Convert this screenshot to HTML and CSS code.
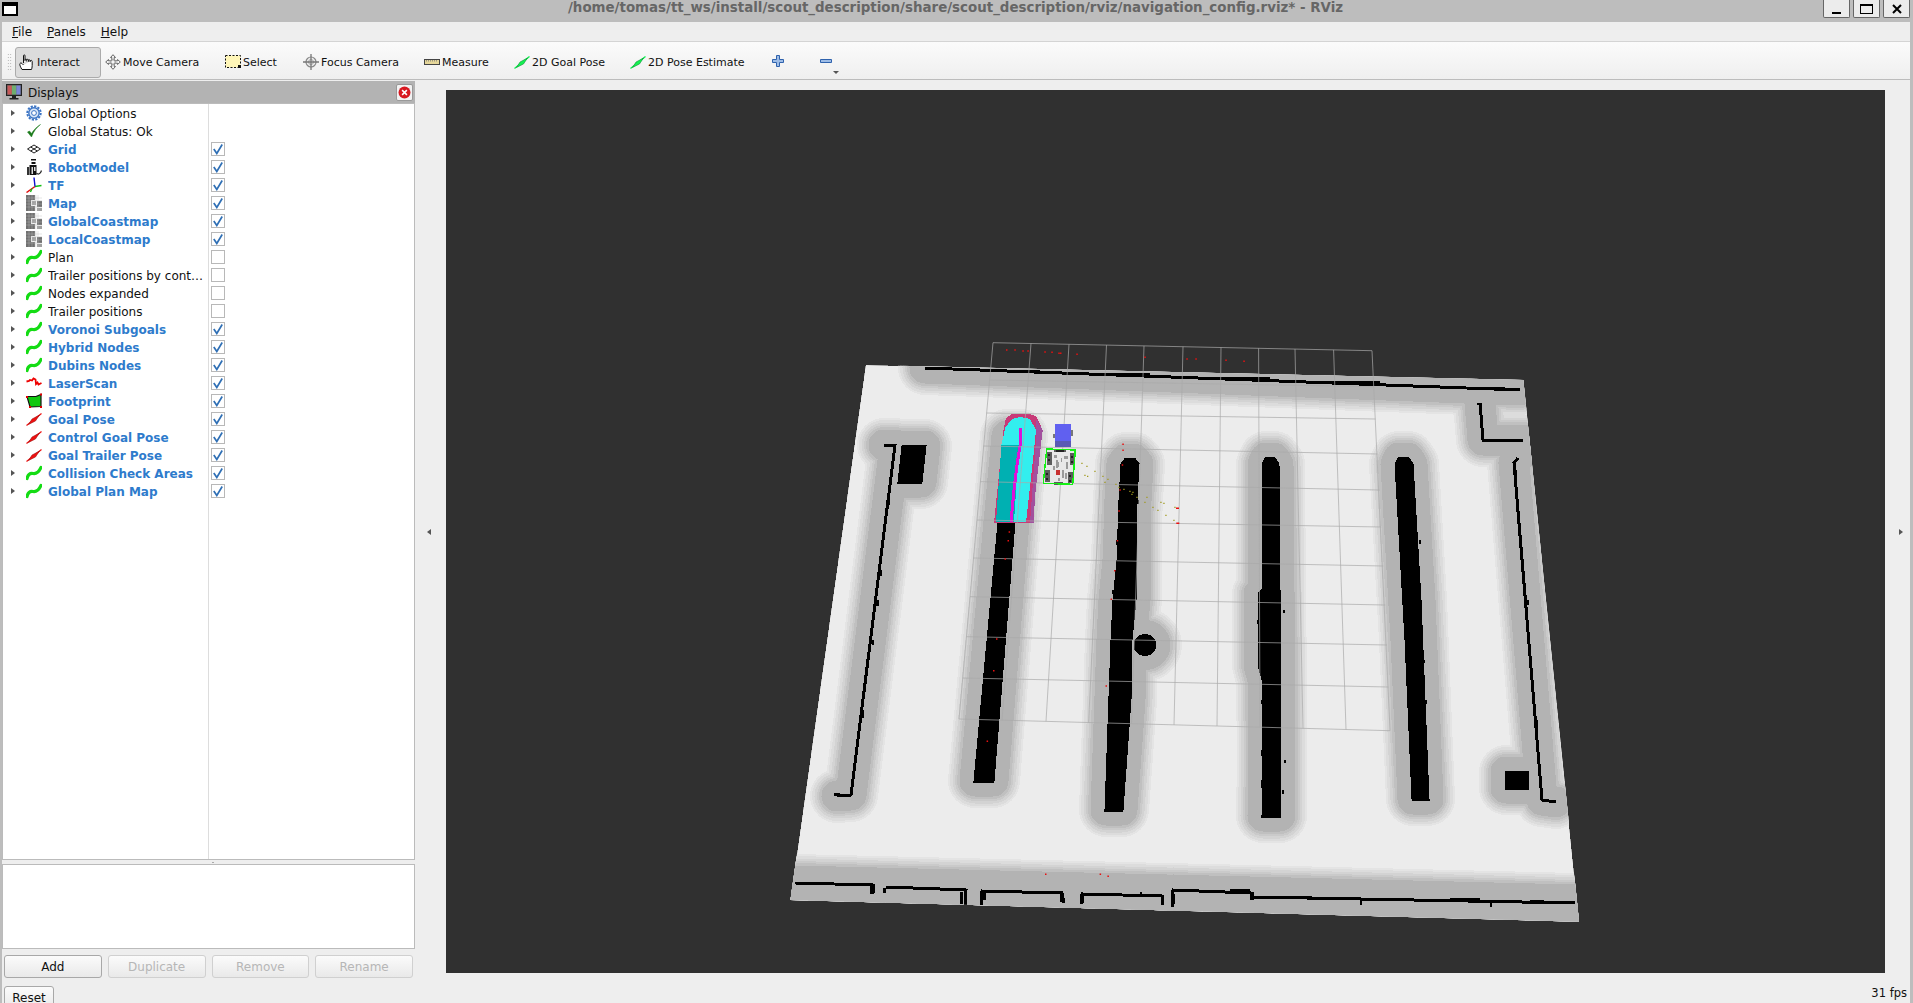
FILE: index.html
```html
<!DOCTYPE html>
<html lang="en">
<head>
<meta charset="utf-8">
<title>RViz</title>
<link rel="stylesheet" href="styles.css">
</head>
<body>
<svg class="defs" aria-hidden="true">
  <symbol id="i-path" viewBox="0 0 16 16"><path d="M1 13.500C2 9.500 4.500 8 7 8.500S12.500 8 15 2.500" fill="none" stroke="#14dc14" stroke-width="3.200" stroke-linecap="round"/></symbol>
  <symbol id="i-map" viewBox="0 0 16 16">
    <rect width="16" height="16" fill="#f4f4f4"/>
    <path d="M0 0h9v5h-4v6h4v5h-9z M11 6h5v6h-5z" fill="#707070"/>
    <path d="M11 0h5v5h-5z" fill="#fff"/>
    <path d="M6 6h4v4h-4z M11 13h5v3h-5z" fill="#a0a0a0"/>
    <path d="M3 0v16M6 0v16M9 0v16M12 0v16M0 3h16M0 6h16M0 9h16M0 12h16" stroke="#bbb" stroke-width=".4"/>
  </symbol>
  <symbol id="i-gear" viewBox="0 0 16 16"><circle cx="8" cy="8" r="5.200" fill="#dbe7f7" stroke="#3b74c4" stroke-width="1.400"/><circle cx="8" cy="8" r="6.700" fill="none" stroke="#3b74c4" stroke-width="2" stroke-dasharray="2.200 1.300"/><circle cx="8" cy="8" r="2.400" fill="#fff" stroke="#3b74c4"/></symbol>
  <symbol id="i-ok" viewBox="0 0 16 16"><path d="M1.500 9L5.500 14C7.500 8.500 10.500 4.500 14.500 1.500C10.500 4 7.500 7 5.500 10.500L3.500 8z" fill="#1a7a1a" stroke="#1a7a1a" stroke-width=".5"/></symbol>
  <symbol id="i-grid" viewBox="0 0 16 16"><path d="M1.500 8L8 4L14.500 8L8 12zM4.700 6L11.300 10M11.300 6L4.700 10" fill="none" stroke="#222" stroke-width="1"/></symbol>
  <symbol id="i-robot" viewBox="0 0 16 16"><path d="M5 0h5v1.500h-5zM5.500 3h4v2h-4zM3.500 6h7v10h-7z" fill="#111"/><path d="M1 8h2v8h-2z" fill="#333"/><path d="M5.500 8h1.500v7h-1.500zM8 8h1.500v4h-1.500z" fill="#ddd"/><path d="M10.500 14C12 16 14.500 15 15.500 11.500" fill="none" stroke="#222" stroke-width="1.200"/></symbol>
  <symbol id="i-tf" viewBox="0 0 16 16"><path d="M9 9.500L.5 15.500" stroke="#e01010" stroke-width="1.500"/><path d="M9 9.500L15.500 8.500M6 11.500L4.500 15" stroke="#10c010" stroke-width="1.300"/><path d="M9 9.500L8 .5" stroke="#1010d0" stroke-width="1.400"/></symbol>
  <symbol id="i-laser" viewBox="0 0 16 16"><path d="M.5 6.500L3 6L4 5L6 5.500L7.500 3.500L9.500 4.500L10 9L11.500 7.500L12.500 9.500L15.500 8" fill="none" stroke="#ee0000" stroke-width="1.800"/></symbol>
  <symbol id="i-foot" viewBox="0 0 16 16"><path d="M1 3.500L10 3.500L15 1.500L15 13.500L4 14z" fill="#10c810" stroke="#111" stroke-width="1.200"/><path d="M0 3h2v2h-2zM14 0.500h2v2h-2zM14 13h2v2h-2zM3 13h2v2h-2z" fill="#e00000"/></symbol>
  <symbol id="i-red" viewBox="0 0 16 16"><path d="M.5 14.500L15.500 2.500" stroke="#ee1010" stroke-width="1.200"/><path d="M2.500 13.500L6 8L13.500 4L9.500 10z" fill="#ee1010" stroke="#901010" stroke-width=".5"/></symbol>
  <symbol id="i-green" viewBox="0 0 16 13"><path d="M.5 12.500L15.500 .5" stroke="#0cf04c" stroke-width="1.300"/><path d="M2.500 11.500L6 6L13.500 2L9.500 8z" fill="#14f050" stroke="#088030" stroke-width=".5"/></symbol>
  <symbol id="i-hand" viewBox="0 0 16 16"><path d="M4.500 9V1.800C4.500 .5 6 .5 6 1.800V7M6 6C6 4.800 7.800 4.800 7.800 6V7.500M7.800 6.200C7.800 5 9.600 5 9.600 6.200V7.800M9.600 6.700C9.600 5.500 11.200 5.500 11.200 6.700V8M11.200 7.200C11.200 6 13.200 6 13.200 7.500V11.500C13.200 13.500 12.500 15.500 12.500 15.500H3C3 15.500 1 12.500 .8 10.500C.7 9 2 8.500 3 9.500L4.500 11" fill="#fff" stroke="#111" stroke-width="1"/></symbol>
  <symbol id="i-move" viewBox="0 0 16 16"><path d="M8 .7L10.500 3.500H9.200V6.800H12.500V5.500L15.300 8L12.500 10.500V9.200H9.200V12.500H10.500L8 15.300L5.500 12.500H6.800V9.200H3.500V10.500L.7 8L3.500 5.500V6.800H6.800V3.500H5.500z" fill="#f4f4f4" stroke="#666" stroke-width="1"/><circle cx="8" cy="8" r="2.500" fill="none" stroke="#999" stroke-width=".8"/></symbol>
  <symbol id="i-select" viewBox="0 0 16 16"><rect x=".5" y="1.500" width="15" height="12" fill="#fff6b8" stroke="#111" stroke-width="1" stroke-dasharray="2 1.500"/><rect x="13" y="11" width="3" height="3" fill="#111"/></symbol>
  <symbol id="i-focus" viewBox="0 0 16 16"><circle cx="8" cy="8" r="5" fill="#eee" stroke="#888" stroke-width="1.200"/><circle cx="8" cy="8" r="2.500" fill="none" stroke="#999" stroke-width=".8"/><path d="M8 0v16M0 8h16" stroke="#777" stroke-width="1.300"/></symbol>
  <symbol id="i-ruler" viewBox="0 0 16 16"><rect x=".5" y="5.500" width="15" height="5" fill="#e6d79a" stroke="#444" stroke-width="1"/><path d="M2.500 6v1.500M4.500 6v1.500M6.500 6v1.500M8.500 6v1.500M10.500 6v1.500M12.500 6v1.500" stroke="#777" stroke-width=".7"/></symbol>
  <symbol id="i-check" viewBox="0 0 12 12"><path d="M1.800 6L4.800 10.500L10.200 1.500" fill="none" stroke="#2f6fb5" stroke-width="1.700"/></symbol>
  <symbol id="i-monitor" viewBox="0 0 16 16"><rect x=".5" y=".5" width="15" height="11" fill="#555" stroke="#222"/><rect x="1.500" y="1.500" width="4.400" height="9" fill="#c85a5a"/><rect x="5.900" y="1.500" width="4.400" height="9" fill="#6fae6f"/><rect x="10.300" y="1.500" width="4.200" height="9" fill="#7a86d8"/><path d="M6 12h4v2h-4zM3.500 14h9v1.500h-9z" fill="#222"/></symbol>
</svg>

<header class="titlebar">
  <svg class="win-icon" viewBox="0 0 16 14"><rect x="1" y="1" width="14" height="12" fill="#fff" stroke="#000" stroke-width="2"/><rect x="1" y="1" width="14" height="3" fill="#000"/></svg>
  <div class="title">/home/tomas/tt_ws/install/scout_description/share/scout_description/rviz/navigation_config.rviz* - RViz</div>
  <div class="win-buttons">
    <div class="win-btn"><span class="glyph-min"></span></div>
    <div class="win-btn"><span class="glyph-max"></span></div>
    <div class="win-btn"><svg class="glyph-close" viewBox="0 0 10 10"><path d="M1 1L9 9M9 1L1 9" stroke="#000" stroke-width="2"/></svg></div>
  </div>
</header>

<div class="client">
  <nav class="menubar"><span><u>F</u>ile</span><span><u>P</u>anels</span><span><u>H</u>elp</span></nav>

  <div class="toolbar">
    <div class="handle"></div>
    <div class="tools">
      <div class="tool active"><svg class="tool-ic"><use href="#i-hand"/></svg>Interact</div>
      <div class="tool"><svg class="tool-ic"><use href="#i-move"/></svg>Move Camera</div>
      <div class="tool"><svg class="tool-ic"><use href="#i-select"/></svg>Select</div>
      <div class="tool"><svg class="tool-ic"><use href="#i-focus"/></svg>Focus Camera</div>
      <div class="tool"><svg class="tool-ic"><use href="#i-ruler"/></svg>Measure</div>
      <div class="tool"><svg class="tool-ic arrow-ic"><use href="#i-green"/></svg>2D Goal Pose</div>
      <div class="tool"><svg class="tool-ic arrow-ic"><use href="#i-green"/></svg>2D Pose Estimate</div>
      <div class="tool"><svg class="pm" viewBox="0 0 12 12"><path d="M4.500 .5h3v4h4v3h-4v4h-3v-4h-4v-3h4z" fill="#9dbce6" stroke="#2f62ad"/></svg></div>
      <div class="tool minus"><svg class="pm" viewBox="0 0 12 12"><path d="M.5 4.500h11v3h-11z" fill="#9dbce6" stroke="#2f62ad"/></svg><span class="more"></span></div>
    </div>
  </div>

  <main class="main">
    <aside class="dock">
      <div class="dock-title">
        <svg class="dock-ic"><use href="#i-monitor"/></svg>
        <span class="dock-name">Displays</span>
        <div class="dock-close"><svg viewBox="0 0 12 12"><circle cx="6" cy="6" r="5.500" fill="#d81820"/><path d="M3.800 3.800L8.200 8.200M8.200 3.800L3.800 8.200" stroke="#fff" stroke-width="1.400"/></svg></div>
      </div>
      <div class="tree">
        <div class="row"><i class="tri"></i><svg class="ic"><use href="#i-gear"/></svg><span class="lbl">Global Options</span></div>
        <div class="row"><i class="tri"></i><svg class="ic"><use href="#i-ok"/></svg><span class="lbl">Global Status: Ok</span></div>
        <div class="row"><i class="tri"></i><svg class="ic"><use href="#i-grid"/></svg><span class="lbl on">Grid</span><span class="box"><svg><use href="#i-check"/></svg></span></div>
        <div class="row"><i class="tri"></i><svg class="ic"><use href="#i-robot"/></svg><span class="lbl on">RobotModel</span><span class="box"><svg><use href="#i-check"/></svg></span></div>
        <div class="row"><i class="tri"></i><svg class="ic"><use href="#i-tf"/></svg><span class="lbl on">TF</span><span class="box"><svg><use href="#i-check"/></svg></span></div>
        <div class="row"><i class="tri"></i><svg class="ic"><use href="#i-map"/></svg><span class="lbl on">Map</span><span class="box"><svg><use href="#i-check"/></svg></span></div>
        <div class="row"><i class="tri"></i><svg class="ic"><use href="#i-map"/></svg><span class="lbl on">GlobalCoastmap</span><span class="box"><svg><use href="#i-check"/></svg></span></div>
        <div class="row"><i class="tri"></i><svg class="ic"><use href="#i-map"/></svg><span class="lbl on">LocalCoastmap</span><span class="box"><svg><use href="#i-check"/></svg></span></div>
        <div class="row"><i class="tri"></i><svg class="ic"><use href="#i-path"/></svg><span class="lbl">Plan</span><span class="box"></span></div>
        <div class="row"><i class="tri"></i><svg class="ic"><use href="#i-path"/></svg><span class="lbl">Trailer positions by cont…</span><span class="box"></span></div>
        <div class="row"><i class="tri"></i><svg class="ic"><use href="#i-path"/></svg><span class="lbl">Nodes expanded</span><span class="box"></span></div>
        <div class="row"><i class="tri"></i><svg class="ic"><use href="#i-path"/></svg><span class="lbl">Trailer positions</span><span class="box"></span></div>
        <div class="row"><i class="tri"></i><svg class="ic"><use href="#i-path"/></svg><span class="lbl on">Voronoi Subgoals</span><span class="box"><svg><use href="#i-check"/></svg></span></div>
        <div class="row"><i class="tri"></i><svg class="ic"><use href="#i-path"/></svg><span class="lbl on">Hybrid Nodes</span><span class="box"><svg><use href="#i-check"/></svg></span></div>
        <div class="row"><i class="tri"></i><svg class="ic"><use href="#i-path"/></svg><span class="lbl on">Dubins Nodes</span><span class="box"><svg><use href="#i-check"/></svg></span></div>
        <div class="row"><i class="tri"></i><svg class="ic"><use href="#i-laser"/></svg><span class="lbl on">LaserScan</span><span class="box"><svg><use href="#i-check"/></svg></span></div>
        <div class="row"><i class="tri"></i><svg class="ic"><use href="#i-foot"/></svg><span class="lbl on">Footprint</span><span class="box"><svg><use href="#i-check"/></svg></span></div>
        <div class="row"><i class="tri"></i><svg class="ic"><use href="#i-red"/></svg><span class="lbl on">Goal Pose</span><span class="box"><svg><use href="#i-check"/></svg></span></div>
        <div class="row"><i class="tri"></i><svg class="ic"><use href="#i-red"/></svg><span class="lbl on">Control Goal Pose</span><span class="box"><svg><use href="#i-check"/></svg></span></div>
        <div class="row"><i class="tri"></i><svg class="ic"><use href="#i-red"/></svg><span class="lbl on">Goal Trailer Pose</span><span class="box"><svg><use href="#i-check"/></svg></span></div>
        <div class="row"><i class="tri"></i><svg class="ic"><use href="#i-path"/></svg><span class="lbl on">Collision Check Areas</span><span class="box"><svg><use href="#i-check"/></svg></span></div>
        <div class="row"><i class="tri"></i><svg class="ic"><use href="#i-path"/></svg><span class="lbl on">Global Plan Map</span><span class="box"><svg><use href="#i-check"/></svg></span></div>
      </div>
      <div class="split-h"></div>
      <div class="desc"></div>
      <div class="actions">
        <button class="btn">Add</button>
        <button class="btn" disabled>Duplicate</button>
        <button class="btn" disabled>Remove</button>
        <button class="btn" disabled>Rename</button>
      </div>
    </aside>

    <div class="split-v"><i class="tri-left"></i></div>

    <svg class="viewport" viewBox="446 90 1439 883">
      <defs>
        <clipPath id="mapclip"><polygon points="865.700,365 1523.300,380 1579,921.800 790.500,900"/></clipPath>
        <g id="walls">
          <polygon points="1007,436 1021,436 993,781 975,781"/>
          <polygon points="1122,464 1126,459 1134,459 1138,464 1135,520 1135,600 1131,640 1130,700 1122,810 1106,810 1112,640 1114,600 1118,560 1120,500"/>
          <ellipse cx="1145" cy="645" rx="10" ry="9.500"/>
          <polygon points="1263,464 1266,458 1274,458 1278,464 1279,590 1280,680 1280,816 1263,816 1264,760 1263,680 1259,665 1259,594 1263,590"/>
          <polygon points="1396,464 1399,458 1408,458 1412,464 1420,600 1428,799 1413,799 1406,640"/>
          <polygon points="903,446 925,446 921,482 899,482"/>
          <polyline points="884,445 895,445 851,795 837,796"/>
          <polyline points="925,368 1198,378 1520,390"/>
          <polyline points="1480,403 1483,440 1523,440"/>
          <polyline points="1518,458 1514,463 1542,800 1556,802"/>
          <polygon points="1506,772 1527,772 1527,788 1506,788"/>
          <polyline points="795,883 873,885 873,893"/>
          <polyline points="886,887 966,890 965,905"/>
          <polyline points="981,905 982,891 1062,893 1064,903"/>
          <polyline points="1081,904 1082,894 1162,896 1162,905"/>
          <polyline points="1172,907 1173,890 1251,893 1253,897 1575,903"/>
        </g>
        <g id="band"><polyline points="795,881 1000,886 1250,892 1575,900"/></g>
      </defs>

      <rect class="vp-bg" x="446" y="90" width="1439" height="883"/>

      <g class="map" clip-path="url(#mapclip)">
        <polygon class="map-free" points="865.700,365 1523.300,380 1579,921.800 790.500,900"/>
        <g class="halo h1"><use href="#walls"/><use href="#band"/></g>
        <g class="halo h2"><use href="#walls"/><use href="#band"/></g>
        <g class="halo h3"><use href="#walls"/><use href="#band"/></g>
        <g class="halo h4"><use href="#walls"/><use href="#band"/></g>
        <g class="halo h5"><use href="#walls"/><use href="#band"/></g>
        <g class="halo h6"><use href="#walls"/><use href="#band"/></g>
        <polygon class="map-gray" points="790,884 1579,904 1579,922 790,900"/>
        <g class="halo wall"><use href="#walls"/></g>
        <path class="wall-rough" d="M925 368h40v2h-40zM1010 370h30v2h-30zM1090 373h60v2.500h-60zM1200 377h70v2.500h-70zM1330 381h50v2.500h-50zM1470 387h35v2.500h-35zM1122 480h2v3h-2zM1116 540h2v5h-2zM1112 590h2v4h-2zM1137 500h2v4h-2zM1135 560h2v6h-2zM1257 620h3v4h-3zM1283 610h2v3h-2zM1261 750h2v6h-2zM1282 790h2v4h-2zM1284 760h2v3h-2zM1261 700h2v4h-2zM1261 780h2v8h-2zM1419 540h2v4h-2zM1411 600h2v5h-2zM1425 700h2v4h-2zM1404 620h2v6h-2zM1423 660h2v3h-2zM1514 470h3v6h-3zM1521 560h2v8h-2zM1532 680h2v5h-2zM1536 720h2v8h-2zM1526 600h3v5h-3zM1540 790h3v8h-3zM1477 403h5v2h-5zM1480 420h2v5h-2zM876 600h3v6h-3zM861 710h3v8h-3zM880 570h2v6h-2zM872 640h2v5h-2zM866 670h2v4h-2zM888 500h2v5h-2zM853 770h2v6h-2zM834 793h6v3h-6zM883 888h3v5h-3zM870 886h4v8h-4zM960 892h3v12h-3zM983 892h3v8h-3zM1060 894h4v8h-4zM1081 896h3v7h-3zM1172 894h3v10h-3zM1140 892h2v4h-2zM1250 892h4v8h-4zM1230 889h20v2h-20zM1300 896h12v2h-12zM1360 899h2v6h-2zM1450 898h30v2h-30zM1490 902h2v5h-2zM1530 900h14v2h-14z"/>
      </g>

      <g class="costmap">
        <polygon class="cost-out" points="994,523 1003.500,430 1006,418 1013,413.500 1028,413.500 1036,416 1042.700,430 1038,470 1035,497 1033.600,523"/>
        <polygon class="cost-out2" points="1030,523 1036,440 1036,419 1042.700,430 1038,470 1035,497 1033.600,523"/>
        <polygon class="cost-cyan" points="996,522 1001.400,445 1005.500,427 1012,419 1020,417 1030,419 1036,430 1034,450 1030,487 1026,522"/>
        <polygon class="cost-teal" points="1001.400,445 1019,445 1014,522 996,522"/>
        <polyline class="cost-line" points="1020,428 1020,446 1017,465 1014,490 1011,522"/>
      </g>

      <g class="grid">
        <path d="M993 342.700L959 719M1031 343.500L1002 720.200M1069 344.300L1046 721.300M1106.500 345.100L1088.600 722.500M1144 345.900L1131.500 723.700M1183 346.700L1174 724.900M1221 347.500L1217 726M1258.600 348.300L1260 727.200M1295 349.100L1303 728.400M1333.600 349.900L1346 729.500M1372 350.700L1390 730.700"/>
        <path d="M993 342.700L1372 350.700M989.600 380L1373.800 386.700M986.500 413L1375.500 419M983.500 446L1377.400 454M980.300 481.700L1379.300 490M976.800 520L1381.300 527M973.400 558L1383.300 566M970 596.700L1385.300 605M966.400 636.700L1387 645M962.700 678L1388.500 687M959 719L1390 730.700"/>
      </g>

      <g class="robot">
        <rect class="blue-a" x="1055" y="424" width="15.700" height="17"/>
        <rect class="blue-b" x="1055" y="441" width="15.700" height="6"/>
        <path class="blue-c" d="M1053 434h2v4h-2zM1070.700 430h2v6h-2z"/>
        <polygon class="rob-body" points="1047,450 1075,451 1072.500,484 1043.500,483"/>
        <path class="rob-wheel" d="M1047 452h5v13h-5zM1070 453h5v12h-5zM1045 470h5v12h-5zM1068 472h5v11h-5zM1054 449h12v3h-12zM1054 482h9v3h-9z"/>
        <path class="rob-dark" d="M1048 454h2v2h-2zM1048 459h2v2h-2zM1071 456h2v2h-2zM1071 461h2v2h-2zM1046 473h2v2h-2zM1046 478h2v2h-2zM1069 475h2v2h-2zM1069 480h2v2h-2zM1056 450h8v2h-8z"/>
        <path class="rob-grey" d="M1054 455h3v3h-3zM1064 456h4v3h-4zM1056 460h2v8h-2zM1066 462h2v7h-2zM1061 458h1v4h-1zM1062 470h2v8h-2zM1058 478h2v3h-2zM1053 466h2v4h-2zM1058 462h1v5h-1zM1065 473h2v6h-2z"/>
        <rect class="rob-red" x="1055.500" y="470" width="4.500" height="5"/>
        <polygon class="rob-frame" points="1046.700,449 1075.300,450 1072.700,484.300 1043.300,483.300"/>
      </g>

      <path class="dots-red" d="M1006 350h1.500M1014.300 350h1.500M1022.300 351h1.500M1027.300 351h1.500M1044.300 352h1.500M1051.300 352.300h1.500M1058.300 353.300h1.500M1060 353.300h1.500M1076.300 354.300h1.500M1144.300 357.300h1.500M1186.300 359h1.500M1195.300 359h1.500M1225.300 360.300h1.500M1243.300 361.300h1.500M1122.300 444.300h1.500M1122.300 450.300h1.500M1121.700 465h1.500M1119.300 490h1.500M1118.300 511h1.500M1176 508.300h3M1176.300 523.300h3M1008.600 532h1.500M1007.500 540.700h1.500M1004.500 559h1.500M996 639h1.500M993 670.700h1.500M1116.700 540.700h1.500M1114 570.700h1.500M1110.600 599.300h1.500M1105.500 686h1.500M1045 874.300h1.500M1099.600 874.300h1.500M1107.400 876.300h1.500M986.600 741.300h1.500"/>
      <path class="dots-yellow" d="M1081.300 463.300h1.300M1086.300 466.300h1.300M1094.300 471.300h1.300M1084.300 475.300h1.300M1087 476.300h1.300M1102.300 476.300h1.300M1107.300 479.300h1.300M1104.300 482.300h1.300M1115.300 484.300h1.300M1118.300 487.300h1.300M1123.300 489.300h1.300M1129.300 491.300h1.300M1132.300 492.300h1.300M1131.300 494.300h1.300M1136.300 497.300h1.300M1146.300 497.300h1.300M1144.300 502.300h1.300M1160.300 502.300h1.300M1163.300 503.300h1.300M1152.300 507.300h1.300M1157.300 510.300h1.300M1174.300 507.300h1.300M1165.300 515.300h1.300M1173.300 520.300h1.300"/>
    </svg>

    <div class="split-r"><i class="tri-right"></i></div>
  </main>

  <footer class="status">
    <button class="btn reset">Reset</button>
    <span class="fps">31 fps</span>
  </footer>
</div>
</body>
</html>
```

FILE: styles.css
```css
* { box-sizing: border-box; }

html, body {
  margin: 0;
  height: 1003px;
  overflow: hidden;
}

body {
  background: #bdbdbd;
  font-family: "DejaVu Sans", sans-serif;
  font-size: 12px;
  color: #111;
}

.defs {
  position: absolute;
  width: 0;
  height: 0;
}

/* window frame */
.titlebar {
  display: flex;
  align-items: flex-start;
  height: 22px;
  background: #bdbdbd;
}

.win-icon {
  width: 16px;
  height: 14px;
  margin: 2px 0 0 2px;
  flex: none;
}

.title {
  flex: 1;
  text-align: center;
  font-weight: bold;
  font-size: 13.400px;
  line-height: 16px;
  color: #666;
  padding-left: 70px;
  white-space: nowrap;
}

.win-buttons {
  display: flex;
  gap: 3px;
  margin-right: 3px;
}

.win-btn {
  width: 27px;
  height: 18px;
  background: #ececec;
  border: 1px solid #666;
  border-top: 0;
  border-radius: 0 0 2px 2px;
  display: flex;
  align-items: center;
  justify-content: center;
}

.glyph-min {
  width: 9px;
  height: 2px;
  margin-top: 9px;
  background: #000;
}

.glyph-max {
  width: 13px;
  height: 10px;
  border: 1px solid #000;
  border-top-width: 2px;
}

.glyph-close {
  width: 10px;
  height: 10px;
}

.client {
  margin: 0 3px 0 2px;
  background: #eeeeee;
  height: 981px;
}

.menubar {
  display: flex;
  height: 19px;
  align-items: center;
  padding-left: 10px;
  gap: 15px;
  background: #eeeeee;
  font-size: 12px;
}

.toolbar {
  display: flex;
  height: 39px;
  padding: 5px 0 2px 5px;
  background: linear-gradient(#fbfbfb, #efefef);
  border-top: 1px solid #d4d4d4;
  border-bottom: 1px solid #bcbcbc;
}

.handle {
  width: 5px;
  margin: 6px 3px 6px 0;
  background: radial-gradient(circle, #aaa 0.6px, transparent 0.8px) 0 0 / 2.5px 3px;
}

.tools {
  display: grid;
  grid-template-columns: 86px 120px 78px 121px 90px 116px 142px 48px 30px;
  height: 31px;
}

.tool {
  display: flex;
  align-items: center;
  padding-left: 4px;
  padding-bottom: 1px;
  font-size: 11px;
  white-space: nowrap;
}

.tool.active {
  padding-left: 3px;
  background: #dcdcdc;
  border: 1px solid #ababab;
  border-radius: 3px;
}

.tool-ic {
  width: 16px;
  height: 16px;
  margin-right: 2px;
  flex: none;
}

.arrow-ic {
  height: 13px;
}

.pm {
  width: 12px;
  height: 12px;
  margin-bottom: 2px;
}

.minus {
  position: relative;
}

.more {
  position: absolute;
  left: 17px;
  top: 24px;
  border-top: 3px solid #555;
  border-left: 3px solid transparent;
  border-right: 3px solid transparent;
}

/* main area */
.main {
  display: flex;
  height: 899px;
}

.dock {
  width: 413px;
  flex: none;
  padding-top: 1px;
}

.dock-title {
  display: flex;
  align-items: center;
  height: 22px;
  padding-left: 4px;
  background: #b3b3b3;
  font-size: 12px;
}

.dock-name {
  padding-top: 2px;
}

.dock-ic {
  width: 16px;
  height: 16px;
  margin-right: 6px;
}

.dock-close {
  width: 17px;
  height: 17px;
  margin-left: auto;
  margin-right: 2px;
  background: #f2f2f2;
  border: 1px solid #999;
  border-radius: 2px;
  padding: 1px;
  display: flex;
}

.tree {
  height: 757px;
  background: #fff linear-gradient(#dddddd, #dddddd) no-repeat 205px 0 / 1px 100%;
  border: 1px solid #bbbbbb;
}

.row {
  display: flex;
  align-items: center;
  height: 18px;
}

.tri {
  width: 0;
  height: 0;
  margin-left: 8px;
  border-left: 4px solid #555;
  border-top: 3.500px solid transparent;
  border-bottom: 3.500px solid transparent;
  flex: none;
}

.ic {
  width: 16px;
  height: 16px;
  margin-left: 11px;
  flex: none;
}

.lbl {
  width: 160px;
  margin-left: 6px;
  padding-top: 2px;
  white-space: nowrap;
  overflow: hidden;
  flex: none;
}

.lbl.on {
  color: #2e7bcc;
  font-weight: bold;
}

.box {
  width: 14px;
  height: 14px;
  margin-left: 3px;
  background: #fff;
  border: 1px solid #b8b8b8;
  flex: none;
}

.box svg {
  display: block;
  width: 12px;
  height: 12px;
}

.split-h {
  height: 4px;
  background: radial-gradient(circle, #aaa 0.6px, transparent 0.8px) no-repeat 202px 1px / 18px 3px;
}

.desc {
  height: 85px;
  background: #fff;
  border: 1px solid #bbbbbb;
}

.actions {
  display: grid;
  grid-template-columns: repeat(4, 1fr);
  gap: 6px;
  padding: 6px 2px 0 2px;
}

.btn {
  height: 23px;
  padding: 0;
  font: 12px "DejaVu Sans", sans-serif;
  color: #111;
  background: linear-gradient(#fbfbfb, #e9e9e9);
  border: 1px solid #a8a8a8;
  border-radius: 3px;
}

.btn:disabled {
  color: #b6b6b6;
  border-color: #d0d0d0;
}

.split-v {
  width: 31px;
  flex: none;
  display: flex;
  align-items: center;
  justify-content: center;
  padding-right: 3px;
  height: 903px;
}

.tri-left {
  border-right: 4px solid #555;
  border-top: 3.500px solid transparent;
  border-bottom: 3.500px solid transparent;
}

.viewport {
  display: block;
  width: 1439px;
  height: 883px;
  margin-top: 10px;
  flex: none;
}

.split-r {
  flex: 1;
  display: flex;
  align-items: center;
  justify-content: center;
  padding-left: 7px;
  height: 903px;
}

.tri-right {
  border-left: 4px solid #555;
  border-top: 3.500px solid transparent;
  border-bottom: 3.500px solid transparent;
}

.status {
  display: flex;
  align-items: flex-start;
  justify-content: space-between;
  height: 24px;
  padding: 7px 3px 0 2px;
}

.reset {
  width: 50px;
  height: 24px;
  border-radius: 3px 3px 0 0;
}

.fps {
  font-size: 11.500px;
  line-height: 14px;
}

/* 3D view */
.vp-bg { fill: #303030; }
.map { shape-rendering: crispEdges; }
.map-free { fill: #ececec; }
.map-gray { fill: #b3b3b3; }

.halo {
  stroke-linejoin: round;
  stroke-linecap: round;
}

#walls polyline, #band polyline { fill: none; }

.h1 { fill: #e4e4e4; stroke: #e4e4e4; stroke-width: 54px; }
.h2 { fill: #dcdcdc; stroke: #dcdcdc; stroke-width: 50px; }
.h3 { fill: #d3d3d3; stroke: #d3d3d3; stroke-width: 45px; }
.h4 { fill: #cacaca; stroke: #cacaca; stroke-width: 40px; }
.h5 { fill: #c0c0c0; stroke: #c0c0c0; stroke-width: 36px; }
.h6 { fill: #b3b3b3; stroke: #b3b3b3; stroke-width: 31px; }
.wall { fill: #000; stroke: #000; stroke-width: 3px; stroke-linecap: butt; stroke-linejoin: miter; }
.wall-rough { fill: #000; }

.costmap { shape-rendering: crispEdges; }
.cost-out { fill: #c83a78; }
.cost-out2 { fill: #a2509e; }
.cost-cyan { fill: #33eeee; }
.cost-teal { fill: #00b0b2; }
.cost-line { fill: none; stroke: #e010d8; stroke-width: 3px; }

.grid path {
  fill: none;
  stroke: #aaaaaa;
  stroke-width: 1px;
  opacity: .7;
}

.robot { shape-rendering: crispEdges; }
.blue-a { fill: #6060f0; }
.blue-b { fill: #5a5ab4; }
.blue-c { fill: #777; }
.rob-body { fill: #e8e8e8; }
.rob-wheel { fill: #5c5c5c; }
.rob-dark { fill: #222; }
.rob-grey { fill: #9a9a9a; }
.rob-red { fill: #c83030; }
.rob-frame { fill: none; stroke: #14f014; stroke-width: 1.400px; }

.dots-red { stroke: #e81010; stroke-width: 1.500px; fill: none; }
.dots-yellow { stroke: #a09a20; stroke-width: 1.300px; fill: none; }
```
